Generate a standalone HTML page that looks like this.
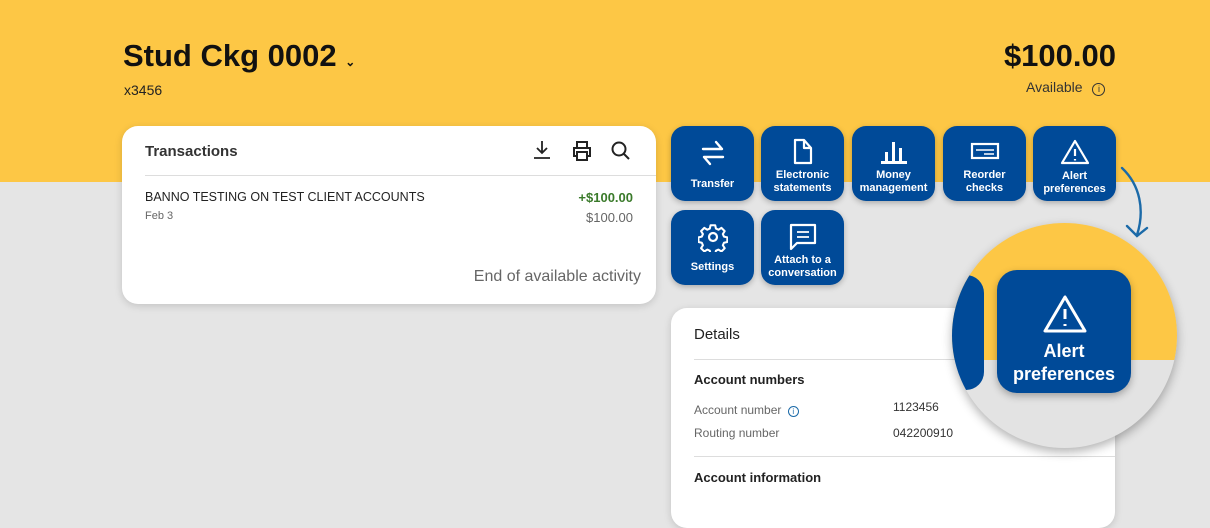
<!DOCTYPE html>
<html><head><style>
*{box-sizing:border-box;margin:0;padding:0}
body{width:1210px;height:500px;overflow:hidden;background:#e5e5e5;font-family:"Liberation Sans",sans-serif;position:relative;color:#222}
.top{position:absolute;left:0;top:0;width:1210px;height:182px;background:#fdc745}
.abs{position:absolute}
.card{position:absolute;background:#fff;border-radius:16px;box-shadow:0 2px 8px rgba(0,0,0,.15)}
.btn{position:absolute;width:83px;height:75px;background:#004a98;border-radius:14px;color:#fff;font-weight:bold;font-size:11px;text-align:center;line-height:13px;box-shadow:0 2px 6px rgba(0,0,0,.25)}
.btn svg{position:absolute;left:50%;transform:translateX(-50%);top:12px}
.btn span{position:absolute;left:0;right:0}
</style></head><body>
<div class="top"></div>
<div class="abs" style="left:123px;top:38px;font-size:31px;font-weight:bold;color:#111">Stud Ckg 0002 <span style="font-size:12px">⌄</span></div>
<div class="abs" style="left:124px;top:82px;font-size:14px;color:#222">x3456</div>
<div class="abs" style="right:94px;top:38px;font-size:31px;font-weight:bold;color:#111">$100.00</div>
<div class="abs" style="left:1026px;top:79px;font-size:14px;color:#333">Available <span style="display:inline-block;width:13px;height:13px;border:1.3px solid #333;border-radius:50%;font-size:9px;text-align:center;line-height:11px;margin-left:6px">i</span></div>

<div class="card" style="left:122px;top:126px;width:534px;height:178px">
  <div class="abs" style="left:23px;top:17px;font-size:15px;font-weight:bold;color:#333">Transactions</div>
  <svg class="abs" style="left:408px;top:13px" width="24" height="22" viewBox="0 0 24 22" fill="none" stroke="#222" stroke-width="1.8"><path d="M12 2v12M7 9l5 5 5-5M4 19h16"/></svg>
  <svg class="abs" style="left:449px;top:14px" width="22" height="22" viewBox="0 0 22 22" fill="none" stroke="#222" stroke-width="2"><path d="M6 7V2h10v5M6 16H3V8h16v8h-3M6 12h10v8H6z"/></svg>
  <svg class="abs" style="left:488px;top:14px" width="22" height="22" viewBox="0 0 22 22" fill="none" stroke="#222" stroke-width="2"><circle cx="9" cy="9" r="6.5"/><path d="M14 14l5 5"/></svg>
  <div class="abs" style="left:23px;top:49px;width:511px;border-top:1px solid #ddd"></div>
  <div class="abs" style="left:23px;top:64px;font-size:12.5px;color:#222">BANNO TESTING ON TEST CLIENT ACCOUNTS</div>
  <div class="abs" style="left:23px;top:84px;font-size:11px;color:#666">Feb 3</div>
  <div class="abs" style="right:23px;top:64px;font-size:13px;color:#3a7a2a;font-weight:bold">+$100.00</div>
  <div class="abs" style="right:23px;top:84px;font-size:13px;color:#666">$100.00</div>
  <div class="abs" style="right:15px;top:142px;font-size:16px;color:#666">End of available activity</div>
</div>

<div class="btn" style="left:671px;top:126px"><svg width="30" height="30" viewBox="0 0 30 30" fill="none" stroke="#fff" stroke-width="2.4" stroke-linecap="round" stroke-linejoin="round"><path d="M5 11h19M18 4l6 7M25 19H6M12 26l-6-7"/></svg><span style="top:52px">Transfer</span></div>
<div class="btn" style="left:761px;top:126px"><svg width="24" height="28" viewBox="0 0 24 28" fill="none" stroke="#fff" stroke-width="2.2" stroke-linejoin="round"><path d="M4 2h9l7 8v15H4zM13 2v8h7"/></svg><span style="top:43px">Electronic<br>statements</span></div>
<div class="btn" style="left:852px;top:126px"><svg width="30" height="28" viewBox="0 0 30 28" fill="#fff"><rect x="2" y="23" width="26" height="3"/><rect x="6" y="14" width="3" height="9"/><rect x="13" y="4" width="3" height="19"/><rect x="20" y="10" width="3" height="13"/></svg><span style="top:43px">Money<br>management</span></div>
<div class="btn" style="left:943px;top:126px"><svg width="30" height="28" viewBox="0 0 30 28" fill="none" stroke="#fff" stroke-width="2.2"><rect x="2" y="6" width="26" height="14"/><path d="M6 12h18M14 16h10" stroke-width="1.6"/></svg><span style="top:43px">Reorder<br>checks</span></div>
<div class="btn" style="left:1033px;top:126px"><svg width="30" height="28" viewBox="0 0 30 28" fill="none" stroke="#fff" stroke-width="2.2" stroke-linejoin="round"><path d="M15 3L2 25h26z"/><path d="M15 11v7M15 21v1.5"/></svg><span style="top:44px">Alert<br>preferences</span></div>
<div class="btn" style="left:671px;top:210px"><svg width="30" height="30" viewBox="0 0 30 30" fill="none" stroke="#fff" stroke-width="2.2" stroke-linejoin="round"><path d="M12.5 2.5h5l.8 3.6 2.7 1.2 3.2-2 3.5 3.5-2 3.2 1.2 2.7 3.6.8v5l-3.6.8-1.2 2.7 2 3.2-3.5 3.5-3.2-2-2.7 1.2-.8 3.6h-5l-.8-3.6-2.7-1.2-3.2 2-3.5-3.5 2-3.2-1.2-2.7-3.6-.8v-5l3.6-.8 1.2-2.7-2-3.2 3.5-3.5 3.2 2 2.7-1.2z" transform="scale(.93) translate(1,1)"/><circle cx="15" cy="15" r="4"/></svg><span style="top:51px">Settings</span></div>
<div class="btn" style="left:761px;top:210px"><svg width="30" height="30" viewBox="0 0 30 30" fill="none" stroke="#fff" stroke-width="2.2" stroke-linejoin="round"><path d="M3 3h24v18H9l-6 6z"/><path d="M9 10h12M9 15h12" stroke-width="1.8"/></svg><span style="top:44px">Attach to a<br>conversation</span></div>

<svg class="abs" style="left:1115px;top:160px" width="40" height="85" viewBox="0 0 40 85" fill="none" stroke="#1b6aa8" stroke-width="2.4" stroke-linecap="round"><path d="M7 8C25 25 30 50 22 75M12 66l10 10 10-8"/></svg>

<div class="card" style="left:671px;top:308px;width:444px;height:220px">
  <div class="abs" style="left:23px;top:18px;font-size:15px;color:#222">Details</div>
  <div class="abs" style="left:23px;top:51px;width:421px;border-top:1px solid #ddd"></div>
  <div class="abs" style="left:23px;top:64px;font-size:13px;font-weight:bold;color:#222">Account numbers</div>
  <div class="abs" style="left:23px;top:95px;font-size:12px;color:#666">Account number <span style="display:inline-block;width:11px;height:11px;border:1px solid #1b6aa8;color:#1b6aa8;border-radius:50%;font-size:8px;text-align:center;line-height:9px;margin-left:3px">i</span></div>
  <div class="abs" style="left:222px;top:92px;font-size:12px;color:#333">1123456</div>
  <div class="abs" style="left:23px;top:118px;font-size:12px;color:#666">Routing number</div>
  <div class="abs" style="left:222px;top:118px;font-size:12px;color:#333">042200910</div>
  <div class="abs" style="left:23px;top:148px;width:421px;border-top:1px solid #ddd"></div>
  <div class="abs" style="left:23px;top:162px;font-size:13px;font-weight:bold;color:#222">Account information</div>
</div>

<div class="abs" style="left:952px;top:223px;width:225px;height:225px;border-radius:50%;overflow:hidden;background:#e3e3e3;box-shadow:0 4px 10px rgba(0,0,0,.3)">
  <div class="abs" style="left:0;top:0;width:225px;height:137px;background:#fdc745"></div>
  <div class="abs" style="left:-40px;top:52px;width:72px;height:115px;background:#004a98;border-radius:18px"></div>
  <div class="abs" style="left:45px;top:47px;width:134px;height:123px;background:#004a98;border-radius:20px;box-shadow:0 3px 8px rgba(0,0,0,.3);color:#fff;font-weight:bold;text-align:center;font-size:18px;line-height:23px">
    <svg class="abs" style="left:45px;top:24px" width="46" height="40" viewBox="0 0 46 40" fill="none" stroke="#fff" stroke-width="3" stroke-linejoin="round"><path d="M23 3L3 37h40z"/><path d="M23 15v10M23 30v2"/></svg>
    <div class="abs" style="left:0;right:0;top:70px">Alert<br>preferences</div>
  </div>
</div>
</body></html>
